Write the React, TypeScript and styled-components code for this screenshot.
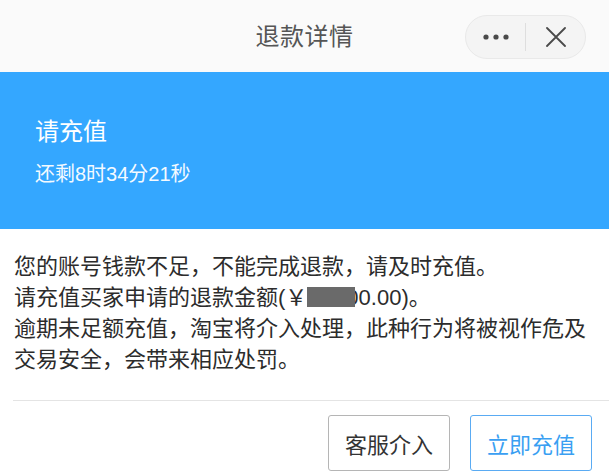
import React from 'react'
import styled, { createGlobalStyle } from 'styled-components'

const GlobalStyle = createGlobalStyle`
  html, body {
    margin: 0;
    padding: 0;
    background: #ffffff;
  }
  body {
    font-family: "Liberation Sans", "Noto Sans CJK SC", sans-serif;
  }
`

const Page = styled.div`
  width: 609px;
  height: 474px;
  overflow: hidden;
  display: flex;
  flex-direction: column;
  background: #fff;
`

const NavBar = styled.div`
  height: 72px;
  flex-shrink: 0;
  position: relative;
  display: flex;
  align-items: center;
  justify-content: center;
  background: #fafafa;
`

const NavTitle = styled.div`
  font-size: 24px;
  color: #555;
  letter-spacing: 0.5px;
  margin-top: -4px;
`

const Capsule = styled.div`
  position: absolute;
  top: 15px;
  left: 465px;
  width: 121px;
  height: 44px;
  box-sizing: border-box;
  border: 1px solid #e9e9e9;
  border-radius: 22px;
  background: #f4f4f4;
  display: flex;
  align-items: center;
`

const CapsuleHalf = styled.div`
  flex: 1;
  height: 100%;
  display: flex;
  align-items: center;
  justify-content: center;
`

const CapsuleSep = styled.div`
  width: 1px;
  height: 28px;
  background: #dedede;
`

const Banner = styled.div`
  height: 157px;
  flex-shrink: 0;
  background: #34a7ff;
  color: #fff;
  padding: 0 35px;
  display: flex;
  flex-direction: column;
  justify-content: center;
`

const BannerTitle = styled.div`
  font-size: 24px;
  line-height: 32px;
  margin-top: 2px;
`

const BannerSub = styled.div`
  font-size: 20px;
  line-height: 26px;
  margin-top: 13px;
  opacity: 0.95;
`

const Content = styled.div`
  padding: 22px 14px 0 14px;
  font-size: 22px;
  line-height: 31px;
  color: #2c2c2c;
`

const Redact = styled.span`
  display: inline-block;
  position: relative;
  z-index: 1;
  width: 48px;
  height: 20px;
  background: #6a6a6a;
  vertical-align: -2px;
  margin-right: -9px;
`

const Divider = styled.div`
  margin: 25px 0 0 13px;
  height: 1px;
  background: #e4e4e4;
`

const Actions = styled.div`
  display: flex;
  justify-content: flex-end;
  gap: 20px;
  padding: 14px 17px 0 0;
`

const Button = styled.div<{ $primary?: boolean }>`
  width: 122px;
  height: 56px;
  box-sizing: border-box;
  border: 1px solid ${p => (p.$primary ? '#5aabf3' : '#b5b5b5')};
  border-radius: 3px;
  display: flex;
  align-items: center;
  justify-content: center;
  font-size: 22px;
  color: ${p => (p.$primary ? '#3a9ff2' : '#333')};
  background: #fff;
`

const App: React.FC = () => {
  return (
    <Page>
      <GlobalStyle />
      <NavBar>
        <NavTitle>退款详情</NavTitle>
        <Capsule>
          <CapsuleHalf>
            <svg width="26" height="6" viewBox="0 0 26 6">
              <circle cx="3" cy="3" r="2.6" fill="#4a4a4a" />
              <circle cx="13" cy="3" r="2.6" fill="#4a4a4a" />
              <circle cx="23" cy="3" r="2.6" fill="#4a4a4a" />
            </svg>
          </CapsuleHalf>
          <CapsuleSep />
          <CapsuleHalf>
            <svg width="20" height="20" viewBox="0 0 20 20">
              <path d="M1 1 L19 19 M19 1 L1 19" stroke="#4a4a4a" strokeWidth="1.8" strokeLinecap="round" />
            </svg>
          </CapsuleHalf>
        </Capsule>
      </NavBar>
      <Banner>
        <BannerTitle>请充值</BannerTitle>
        <BannerSub>还剩8时34分21秒</BannerSub>
      </Banner>
      <Content>
        您的账号钱款不足，不能完成退款，请及时充值。
        <br />
        请充值买家申请的退款金额(￥<Redact />00.00)。
        <br />
        逾期未足额充值，淘宝将介入处理，此种行为将被视作危及交易安全，会带来相应处罚。
      </Content>
      <Divider />
      <Actions>
        <Button>客服介入</Button>
        <Button $primary>立即充值</Button>
      </Actions>
    </Page>
  )
}

export default App
